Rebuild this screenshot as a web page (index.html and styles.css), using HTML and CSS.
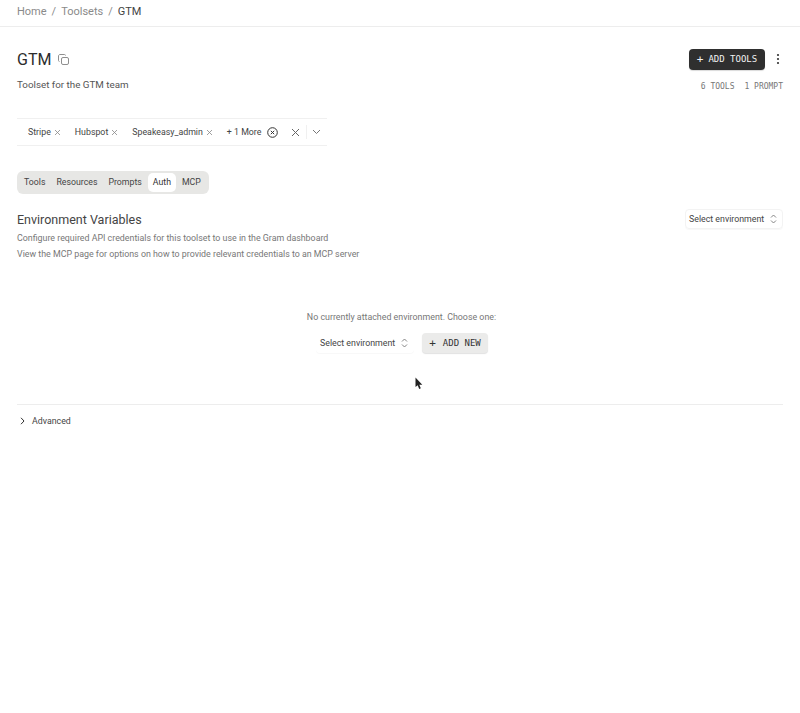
FILE: index.html
```html
<!DOCTYPE html>
<html lang="en">
<head>
<meta charset="utf-8">
<title>GTM</title>
<link rel="stylesheet" href="styles.css">
</head>
<body>
<header class="crumbs">
  <span class="crumb">Home</span><span class="crumb">/</span><span class="crumb">Toolsets</span><span class="crumb">/</span><span class="crumb current">GTM</span>
</header>
<main class="page">
  <section class="title-row">
    <div class="title-left">
      <h1 class="title">GTM</h1>
      <svg class="copy-icon" width="11" height="11" viewBox="0 0 11 11" fill="none" stroke="#8f8f8f" stroke-width="1"><rect x="3.5" y="3.500" width="7" height="7" rx="1.500"/><path d="M1.500 7.500C.9 7.500.5 7 .5 6.500V2C.5 1.200 1.200.5 2 .5h4.500c.5 0 1 .4 1 1"/></svg>
    </div>
    <div class="title-actions">
      <button class="btn-dark"><span class="plus">+</span>ADD TOOLS</button>
      <svg class="kebab" width="4" height="12" viewBox="0 0 4 12" fill="#333"><circle cx="2" cy="2" r="1.100"/><circle cx="2" cy="6" r="1.100"/><circle cx="2" cy="10" r="1.100"/></svg>
    </div>
  </section>
  <section class="desc-row">
    <p class="desc">Toolset for the GTM team</p>
    <div class="counts"><span>6 TOOLS</span><span>1 PROMPT</span></div>
  </section>
  <section class="filter">
    <span class="tag">Stripe<svg class="x" width="7" height="7" viewBox="0 0 7 7" stroke="#888" stroke-width=".8"><path d="M1 1l5 5M6 1L1 6"/></svg></span>
    <span class="tag">Hubspot<svg class="x" width="7" height="7" viewBox="0 0 7 7" stroke="#888" stroke-width=".8"><path d="M1 1l5 5M6 1L1 6"/></svg></span>
    <span class="tag">Speakeasy_admin<svg class="x" width="7" height="7" viewBox="0 0 7 7" stroke="#888" stroke-width=".8"><path d="M1 1l5 5M6 1L1 6"/></svg></span>
    <span class="tag more">+ 1 More<svg class="more-x" width="11" height="11" viewBox="0 0 11 11" fill="none" stroke="#333" stroke-width="1"><circle cx="5.500" cy="5.500" r="4.800"/><path d="M3.800 3.800l3.400 3.400M7.200 3.800l-3.400 3.400"/></svg></span>
    <svg class="clear" width="9" height="9" viewBox="0 0 9 9" stroke="#666" stroke-width="1"><path d="M1 1l7 7M8 1L1 8"/></svg>
    <span class="divider"></span>
    <svg class="caret" width="9" height="6" viewBox="0 0 9 6" fill="none" stroke="#777" stroke-width="1"><path d="M1 1l3.500 3.500L8 1"/></svg>
  </section>
  <nav class="tabs">
    <span class="tab">Tools</span><span class="tab">Resources</span><span class="tab">Prompts</span><span class="tab active">Auth</span><span class="tab">MCP</span>
  </nav>
  <section class="env-head">
    <div>
      <h2 class="env-title">Environment Variables</h2>
      <p class="env-text">Configure required API credentials for this toolset to use in the Gram dashboard</p>
      <p class="env-text">View the MCP page for options on how to provide relevant credentials to an MCP server</p>
    </div>
    <button class="select select-top">Select environment<svg width="7" height="10" viewBox="0 0 7 10" fill="none" stroke="#777" stroke-width=".9"><path d="M1 3.500L3.500 1 6 3.500M1 6.500L3.500 9 6 6.500"/></svg></button>
  </section>
  <section class="empty">
    <p class="empty-text">No currently attached environment. Choose one:</p>
    <div class="empty-actions">
      <button class="select">Select environment<svg width="7" height="10" viewBox="0 0 7 10" fill="none" stroke="#777" stroke-width=".9"><path d="M1 3.500L3.500 1 6 3.500M1 6.500L3.500 9 6 6.500"/></svg></button>
      <button class="btn-light"><span class="plus">+</span>ADD NEW</button>
    </div>
    <svg class="cursor" width="8" height="13" viewBox="0 0 8 13" fill="#222"><path d="M0.500 0.500V10L2.700 8.200L4.200 12L5.800 11.300L4.300 7.700H7.300Z"/></svg>
  </section>
  <section class="advanced">
    <svg width="5" height="8" viewBox="0 0 5 8" fill="none" stroke="#333" stroke-width="1"><path d="M1 .8L4 4 1 7.200"/></svg>
    <span>Advanced</span>
  </section>
</main>
</body>
</html>
```
FILE: styles.css
```css
* { box-sizing: border-box; }
html, body { margin: 0; padding: 0; }
body {
  width: 800px;
  height: 713px;
  overflow: hidden;
  background: #fff;
  color: #333;
  font-family: Roboto, "Liberation Sans", sans-serif;
  font-size: 8.800px;
}
svg { flex: none; }
p, h1, h2 { margin: 0; font-weight: 400; }
button { font: inherit; border: 0; }

.crumbs {
  height: 27px;
  padding: 3px 17px 0;
  display: flex;
  gap: 5px;
  align-items: flex-start;
  border-bottom: 1px solid #ededed;
  font-size: 11px;
  line-height: 17px;
  color: #8a8a8a;
}
.current { color: #444; }

.page { padding: 0 17px; }

.title-row {
  height: 24px;
  margin-top: 20px;
  display: flex;
  align-items: center;
  justify-content: space-between;
}
.title-left { display: flex; align-items: center; gap: 7px; }
.title { padding-top: 1px; font-size: 16px; line-height: 24px; color: #2c2c2c; }
.copy-icon { margin-top: 1px; }
.title-actions { display: flex; align-items: center; gap: 11px; padding-right: 3px; }
.btn-dark {
  height: 21px;
  width: 76px;
  display: flex;
  align-items: center;
  justify-content: center;
  gap: 5px;
  background: #2f2f2f;
  color: #f2f2f2;
  border-radius: 4px;
  font-family: "DejaVu Sans Mono", monospace;
  font-size: 9px;
  box-shadow: 0 1px 1px rgba(0, 0, 0, .15);
}
.plus { font-size: 11px; font-weight: 400; }

.desc-row {
  height: 18px;
  margin-top: 5px;
  display: flex;
  align-items: center;
  justify-content: space-between;
}
.desc { padding-bottom: 2px; font-size: 9.800px; color: #555; }
.counts {
  display: flex;
  gap: 10px;
  padding-top: 3px;
  font-family: "DejaVu Sans Mono", monospace;
  font-size: 8px;
  color: #777;
}

.filter {
  width: 310px;
  height: 28px;
  margin-top: 24px;
  padding-left: 11px;
  display: flex;
  align-items: center;
  border-top: 1px solid #f0f0f0;
  border-bottom: 1px solid #f0f0f0;
  color: #444;
}
.tag { display: inline-flex; align-items: center; gap: 3px; margin-right: 14px; white-space: nowrap; }
.x { margin-top: 1px; }
.more { margin-right: 0; gap: 6px; }
.clear { margin-left: 13px; }
.divider { width: 1px; height: 14px; margin: 0 5px 0 6px; background: #f0f0f0; }

.tabs {
  width: 192px;
  height: 23px;
  margin-top: 25px;
  padding: 2px;
  display: flex;
  align-items: center;
  gap: 1px;
  background: #e7e7e5;
  border-radius: 6px;
  color: #444;
  font-size: 8.750px;
}
.tab { padding: 0 5px; line-height: 19px; }
.active { background: #fff; border-radius: 5px; color: #333; }

.env-head {
  margin-top: 17px;
  display: flex;
  justify-content: space-between;
  align-items: flex-start;
}
.env-title { font-size: 12.500px; line-height: 18px; color: #444; margin-bottom: 1px; }
.env-text { font-size: 8.850px; line-height: 16px; color: #777; }
.select {
  width: 98px;
  height: 20px;
  display: inline-flex;
  align-items: center;
  gap: 6px;
  padding: 0 4px;
  background: #fff;
  border-radius: 4px;
  color: #444;
  box-shadow: 0 1px 1px rgba(0, 0, 0, .03);
}
.select-top { outline: 1px solid #f3f3f3; outline-offset: -1px; margin-top: -2px; }

.empty { position: relative; margin-top: 48px; padding-bottom: 51px; padding-left: 3px; border-bottom: 1px solid #ededed; text-align: center; }
.empty-text { font-size: 8.850px; line-height: 14px; color: #777; }
.empty-actions { margin-top: 9px; padding-left: 1px; display: flex; justify-content: center; gap: 8px; }
.btn-light {
  height: 20px;
  width: 66px;
  display: flex;
  align-items: center;
  justify-content: center;
  gap: 7px;
  background: #ebebea;
  color: #333;
  border-radius: 4px;
  font-family: "DejaVu Sans Mono", monospace;
  font-size: 9px;
  box-shadow: 0 1px 1px rgba(0, 0, 0, .12);
}
.cursor { position: absolute; left: 398px; top: 67px; }

.advanced {
  height: 32px;
  padding-left: 3px;
  display: flex;
  align-items: center;
  gap: 7px;
  color: #444;
}
```
